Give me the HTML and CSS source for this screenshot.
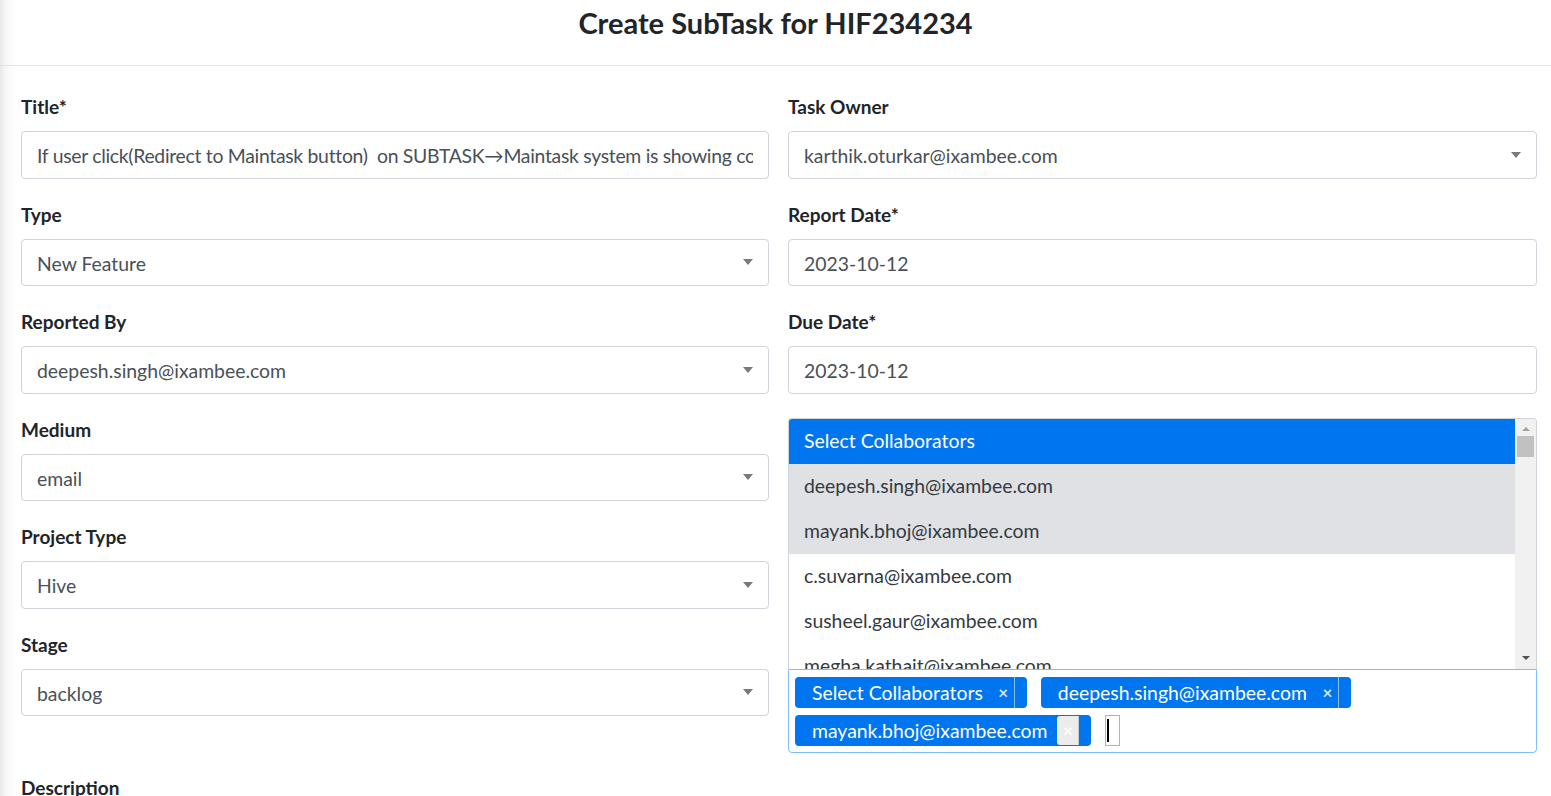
FILE: index.html
```html
<!DOCTYPE html>
<html>
<head>
<meta charset="utf-8">
<link rel="stylesheet" href="styles.css">
</head>
<body>
<div class="modal">
  <div class="modal-header">
    <h4 class="modal-title">Create SubTask for HIF234234</h4>
  </div>
  <div class="modal-body">
    <div class="grid">
      <div class="col">
        <div class="field">
          <label class="lbl">Title*</label>
          <div class="control"><span class="val title-val">If user click(Redirect to Maintask button)&nbsp; on SUBTASK→Maintask system is showing co</span></div>
        </div>
        <div class="field">
          <label class="lbl">Type</label>
          <div class="control select"><span class="val">New Feature</span><span class="caret"></span></div>
        </div>
        <div class="field">
          <label class="lbl">Reported By</label>
          <div class="control select"><span class="val">deepesh.singh@ixambee.com</span><span class="caret"></span></div>
        </div>
        <div class="field">
          <label class="lbl">Medium</label>
          <div class="control select"><span class="val">email</span><span class="caret"></span></div>
        </div>
        <div class="field">
          <label class="lbl">Project Type</label>
          <div class="control select"><span class="val">Hive</span><span class="caret"></span></div>
        </div>
        <div class="field">
          <label class="lbl">Stage</label>
          <div class="control select"><span class="val">backlog</span><span class="caret"></span></div>
        </div>
        <div class="field desc">
          <label class="lbl">Description</label>
        </div>
      </div>
      <div class="col">
        <div class="field">
          <label class="lbl">Task Owner</label>
          <div class="control select"><span class="val">karthik.oturkar@ixambee.com</span><span class="caret"></span></div>
        </div>
        <div class="field">
          <label class="lbl">Report Date*</label>
          <div class="control"><span class="val">2023-10-12</span></div>
        </div>
        <div class="field">
          <label class="lbl">Due Date*</label>
          <div class="control"><span class="val">2023-10-12</span></div>
        </div>
        <div class="multi">
          <div class="listbox">
            <div class="options">
              <div class="opt head">Select Collaborators</div>
              <div class="opt sel">deepesh.singh@ixambee.com</div>
              <div class="opt sel">mayank.bhoj@ixambee.com</div>
              <div class="opt">c.suvarna@ixambee.com</div>
              <div class="opt">susheel.gaur@ixambee.com</div>
              <div class="opt">megha.kathait@ixambee.com</div>
            </div>
            <div class="scrollbar">
              <span class="arrow up"></span>
              <span class="thumb"></span>
              <span class="spacer"></span>
              <span class="arrow down"></span>
            </div>
          </div>
          <div class="tags">
            <span class="chip"><span class="chip-text">Select Collaborators</span><span class="chip-x">×</span></span>
            <span class="chip"><span class="chip-text">deepesh.singh@ixambee.com</span><span class="chip-x">×</span></span>
            <span class="chip"><span class="chip-text">mayank.bhoj@ixambee.com</span><span class="chip-x hover">×</span></span>
            <span class="cursor"><span class="bar"></span></span>
          </div>
        </div>
      </div>
    </div>
  </div>
</div>
</body>
</html>
```
FILE: styles.css
```css
* { box-sizing: border-box; }
html, body { margin: 0; height: 100%; }
body {
  font-family: "Lato", "Liberation Sans", sans-serif;
  background: linear-gradient(to right, #e9e9e9 0, #f7f7f7 6px, #ffffff 16px);
  color: #212529;
  overflow: hidden;
}
.modal { width: 1551px; height: 796px; }
.modal-header {
  height: 66px;
  border-bottom: 1px solid #e3e3e3;
  display: flex;
  justify-content: center;
}
.modal-title {
  margin: 0;
  font-size: 29px;
  font-weight: 700;
  line-height: 45px;
  color: #212529;
}
.modal-body { padding: 27px 14px 0 21px; }
.grid {
  display: grid;
  grid-template-columns: 748px 749px;
  column-gap: 19px;
}
.field { margin-bottom: 22px; }
.lbl {
  display: block;
  font-size: 19px;
  font-weight: 700;
  line-height: 27px;
  margin-bottom: 11px;
  color: #212529;
}
.field.desc { margin-top: 58px; }
.control {
  position: relative;
  height: 47.5px;
  border: 1px solid #ced4da;
  border-radius: 4px;
  padding: 0 40px 0 15px;
  display: flex;
  align-items: center;
  overflow: hidden;
  white-space: nowrap;
  font-size: 19.4px;
  color: #495057;
}
.control .val { display: block; min-width: 0; overflow: hidden; padding-top: 2px; }
.control .title-val { letter-spacing: -0.3px; }
.control:not(.select) { padding-right: 15px; }
.caret {
  position: absolute;
  right: 15px;
  top: 50%;
  margin-top: -3px;
  width: 0; height: 0;
  border-left: 5px solid transparent;
  border-right: 5px solid transparent;
  border-top: 6px solid #7a7a7a;
}
.multi { margin-top: 24.5px; }
.listbox {
  height: 251px;
  border: 1px solid #ced4da;
  border-bottom: none;
  border-radius: 4px 4px 0 0;
  display: flex;
  overflow: hidden;
}
.options { flex: 1; overflow: hidden; }
.opt {
  height: 45px;
  line-height: 43px;
  padding-left: 15px;
  font-size: 19.4px;
  color: #343a40;
  white-space: nowrap;
}
.opt.head { background: #0075f0; color: #ffffff; }
.opt.sel { background: #dfe1e5; }
.scrollbar {
  width: 21px;
  background: #f1f1f1;
  display: flex;
  flex-direction: column;
  align-items: center;
}
.arrow { width: 0; height: 0; border-left: 4px solid transparent; border-right: 4px solid transparent; }
.arrow.up { border-bottom: 4px solid #a3a3a3; margin-top: 8px; }
.arrow.down { border-top: 4px solid #505050; margin-bottom: 9px; }
.thumb { width: 17px; height: 21px; background: #c1c1c1; margin-top: 5px; }
.spacer { flex: 1; }
.tags {
  border: 1px solid #80bdff;
  border-radius: 0 0 4px 4px;
  height: 84px;
  padding: 7px 6px 0 6px;
  display: flex;
  flex-wrap: wrap;
  align-content: flex-start;
  column-gap: 14px;
  row-gap: 7px;
}
.chip {
  height: 31px;
  background: #0075f0;
  color: #ffffff;
  border-radius: 4px;
  display: inline-flex;
  align-items: center;
  padding: 0 12px 0 17px;
  font-size: 19.4px;
  white-space: nowrap;
}
.chip-x {
  margin-left: 10px;
  width: 22px;
  height: 31px;
  line-height: 31px;
  text-align: center;
  font-weight: 700;
  font-size: 17px;
  color: #d6e6ff;
  border-right: 1px solid rgba(255,255,255,0.55);
}
.chip-x.hover { background: #ececec; color: #ffffff; height: 29px; line-height: 29px; border-right: 1px solid #c9c9c9; border-radius: 3px 0 0 3px; }
.cursor {
  width: 15px;
  height: 31px;
  border: 1px solid #80bdff;
  display: inline-flex;
  align-items: center;
  padding-left: 1px;
}
.cursor .bar { width: 2px; height: 23px; background: #000; }
```
